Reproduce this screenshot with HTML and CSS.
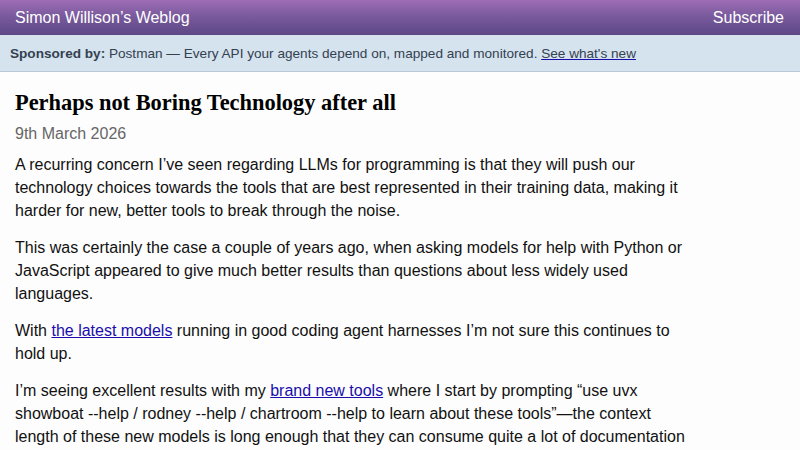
FILE: index.html
```html
<!DOCTYPE html>
<html lang="en">
<head>
    <meta charset="UTF-8">
    <meta name="viewport" content="width=device-width, initial-scale=1.0">
    <title>Perhaps not Boring Technology after all</title>
    <link rel="stylesheet" href="styles.css">
</head>
<body>
    <header class="site-header">
        <a class="site-title" href="#">Simon Willison’s Weblog</a>
        <a class="subscribe" href="#">Subscribe</a>
    </header>
    <div class="sponsor">
        <strong>Sponsored by:</strong> Postman — Every API your agents depend on, mapped and monitored. <a href="#">See what's new</a>
    </div>
    <div class="wrapper">
        <div class="entry">
            <h2>Perhaps not Boring Technology after all</h2>
            <p class="date">9th March 2026</p>
            <p>A recurring concern I’ve seen regarding LLMs for programming is that they will push our technology choices towards the tools that are best represented in their training data, making it harder for new, better tools to break through the noise.</p>
            <p>This was certainly the case a couple of years ago, when asking models for help with Python or JavaScript appeared to give much better results than questions about less widely used languages.</p>
            <p>With <a href="#">the latest models</a> running in good coding agent harnesses I’m not sure this continues to hold up.</p>
            <p>I’m seeing excellent results with my <a href="#">brand new tools</a> where I start by prompting “use uvx showboat --help / rodney --help / chartroom --help to learn about these tools”—the context length of these new models is long enough that they can consume quite a lot of documentation before they start working on a problem.</p>
        </div>
    </div>
</body>
</html>
```

FILE: styles.css
```css
* {
    box-sizing: border-box;
}
body {
    margin: 0;
    background: #fdfdfd;
    color: #111;
    font-family: "Liberation Sans", Arial, sans-serif;
    font-size: 16px;
    line-height: 23px;
}
a {
    color: #1a0dab;
}
.site-header {
    display: flex;
    justify-content: space-between;
    align-items: center;
    height: 35px;
    padding: 0 16px 0 15px;
    background: linear-gradient(to bottom, #9e6db5 0%, #7a5a9e 45%, #5d4884 100%);
}
.site-header a {
    color: #fff;
    text-decoration: none;
    font-size: 16px;
}
.sponsor {
    background: #d5e3ef;
    border-bottom: 1px solid #b9c8d6;
    color: #34414f;
    font-size: 13.6px;
    line-height: 18px;
    padding: 10px 10px 8px 10px;
}
.sponsor a {
    color: #34414f;
    text-decoration-color: #1a0dab;
}
.wrapper {
    padding: 0 15px;
}
.entry {
    width: 672px;
}
.entry h2 {
    font-family: "Liberation Serif", "Times New Roman", serif;
    font-size: 22.4px;
    line-height: 28px;
    margin: 17px 0 5px;
    color: #000;
}
.entry p {
    margin: 0 0 14px;
}
.entry .date {
    color: #666;
    margin: 0 0 8px;
}
```
